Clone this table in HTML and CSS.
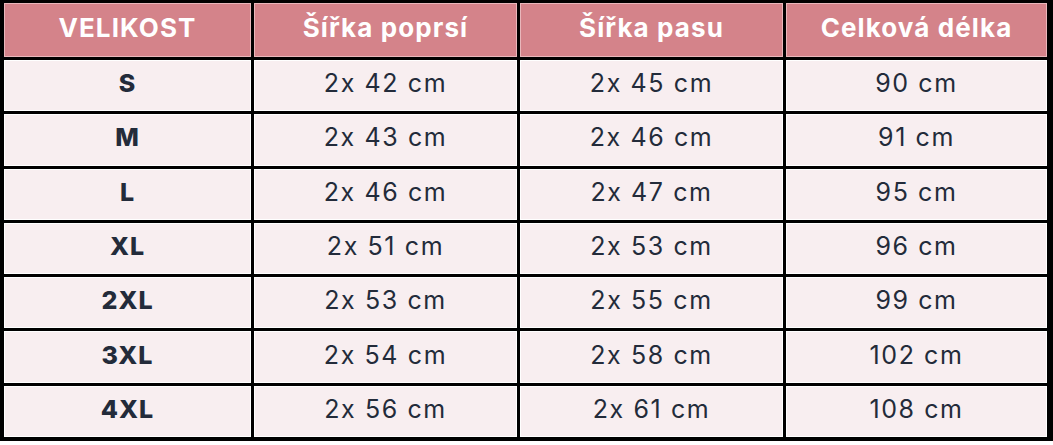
FILE: index.html
```html
<!DOCTYPE html>
<html lang="cs">
<head>
<meta charset="utf-8">
<title>Tabulka velikostí</title>
<link rel="stylesheet" href="styles.css">
</head>
<body>
<div class="size-table">
  <div class="cell head">VELIKOST</div>
  <div class="cell head">Šířka poprsí</div>
  <div class="cell head">Šířka pasu</div>
  <div class="cell head">Celková délka</div>

  <div class="cell size">S</div><div class="cell">2x 42 cm</div><div class="cell">2x 45 cm</div><div class="cell">90 cm</div>
  <div class="cell size">M</div><div class="cell">2x 43 cm</div><div class="cell">2x 46 cm</div><div class="cell">91 cm</div>
  <div class="cell size">L</div><div class="cell">2x 46 cm</div><div class="cell">2x 47 cm</div><div class="cell">95 cm</div>
  <div class="cell size">XL</div><div class="cell">2x 51 cm</div><div class="cell">2x 53 cm</div><div class="cell">96 cm</div>
  <div class="cell size">2XL</div><div class="cell">2x 53 cm</div><div class="cell">2x 55 cm</div><div class="cell">99 cm</div>
  <div class="cell size">3XL</div><div class="cell">2x 54 cm</div><div class="cell">2x 58 cm</div><div class="cell">102 cm</div>
  <div class="cell size">4XL</div><div class="cell">2x 56 cm</div><div class="cell">2x 61 cm</div><div class="cell">108 cm</div>
</div>
</body>
</html>
```

FILE: styles.css
```css
html, body {
  margin: 0;
  padding: 0;
  background: #ffffff;
}

body {
  width: 1053px;
  height: 445px;
  overflow: hidden;
  font-family: Inter, "Noto Sans", "Liberation Sans", sans-serif;
  font-feature-settings: "calt" 0;
}

.size-table {
  box-sizing: border-box;
  height: 441px;
  background: #000000;
  padding: 3px 6px 4px 4px;
  display: grid;
  grid-template-columns: 247px 263px 263px 261px;
  grid-template-rows: 54px repeat(7, 1fr);
  gap: 3px;
}

.cell {
  display: flex;
  align-items: center;
  justify-content: center;
  background: #f8eef0;
  box-shadow: inset 0 0 0 1px #ffffff;
  color: #232b3a;
  font-size: 25px;
  font-weight: 400;
  letter-spacing: 1.6px;
  padding-bottom: 5px;
  box-sizing: border-box;
}

.head {
  background: #d4838a;
  box-shadow: inset 0 0 0 1px #e9b7bb;
  color: #ffffff;
  font-weight: 700;
  font-size: 26px;
  letter-spacing: 1.1px;
  padding-bottom: 5px;
}

.size {
  font-weight: 800;
  font-size: 25px;
  letter-spacing: 1px;
}
```
